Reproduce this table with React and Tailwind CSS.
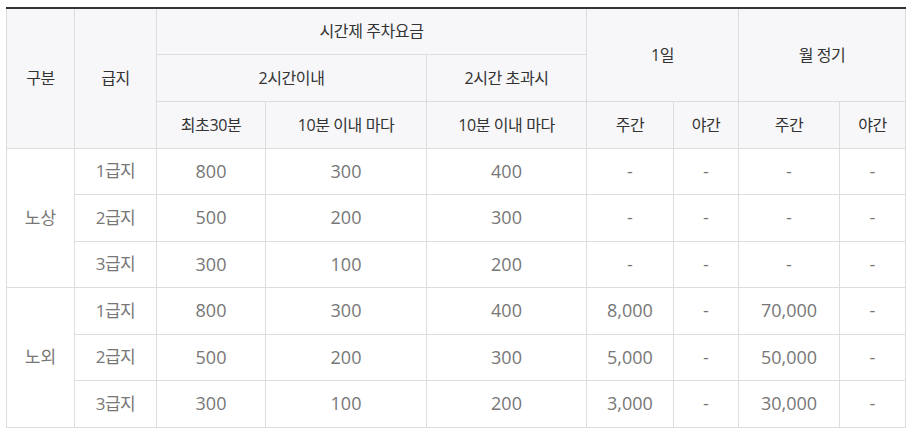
const FONT = { fontFamily: '"Open Sans", "Noto Sans CJK KR", sans-serif' };

const COLS = [68, 82, 109, 161, 160, 87, 65, 101, 66];

const ROWS = [
  { group: '노상', items: [
    ['1급지', '800', '300', '400', '-', '-', '-', '-'],
    ['2급지', '500', '200', '300', '-', '-', '-', '-'],
    ['3급지', '300', '100', '200', '-', '-', '-', '-'],
  ] },
  { group: '노외', items: [
    ['1급지', '800', '300', '400', '8,000', '-', '70,000', '-'],
    ['2급지', '500', '200', '300', '5,000', '-', '50,000', '-'],
    ['3급지', '300', '100', '200', '3,000', '-', '30,000', '-'],
  ] },
];

const BODY_H = ['h-[46px]', 'h-[47px]', 'h-[46px]', 'h-[47px]', 'h-[46px]', 'h-[47px]'];

const th = 'border border-[#dddddd] bg-[#f7f7f9] font-normal text-[#333333] text-[16px] tracking-[-0.4px] text-center align-middle';
const td = 'border border-[#dddddd] text-[#777777] text-center align-middle';

export default function App() {
  return (
    <div className="bg-white w-[920px] h-[436px] pt-[7px] pl-[6px]" style={FONT}>
      <table className="table-fixed border-collapse w-[899px] border-t-2 border-t-[#333333]">
        <colgroup>
          {COLS.map((w, i) => (
            <col key={i} style={{ width: w }} />
          ))}
        </colgroup>
        <thead>
          <tr className="h-[46px]">
            <th rowSpan={3} className={th}>구분</th>
            <th rowSpan={3} className={th}>급지</th>
            <th colSpan={3} className={th}>시간제 주차요금</th>
            <th colSpan={2} rowSpan={2} className={th}>1일</th>
            <th colSpan={2} rowSpan={2} className={th}>월 정기</th>
          </tr>
          <tr className="h-[47px]">
            <th colSpan={2} className={th}>2시간이내</th>
            <th className={th}>2시간 초과시</th>
          </tr>
          <tr className="h-[47px]">
            <th className={th}>최초30분</th>
            <th className={th}>10분 이내 마다</th>
            <th className={th}>10분 이내 마다</th>
            <th className={th}>주간</th>
            <th className={th}>야간</th>
            <th className={th}>주간</th>
            <th className={th}>야간</th>
          </tr>
        </thead>
        <tbody>
          {ROWS.map((g, gi) =>
            g.items.map((r, i) => (
              <tr key={g.group + i} className={BODY_H[gi * 3 + i]}>
                {i === 0 && (
                  <td rowSpan={3} className={td + ' text-[17px]'}>{g.group}</td>
                )}
                {r.map((c, j) => (
                  <td key={j} className={td + (j === 0 ? ' text-[17px] tracking-[-0.5px]' : ' text-[18px]')}>{c}</td>
                ))}
              </tr>
            ))
          )}
        </tbody>
      </table>
    </div>
  );
}
